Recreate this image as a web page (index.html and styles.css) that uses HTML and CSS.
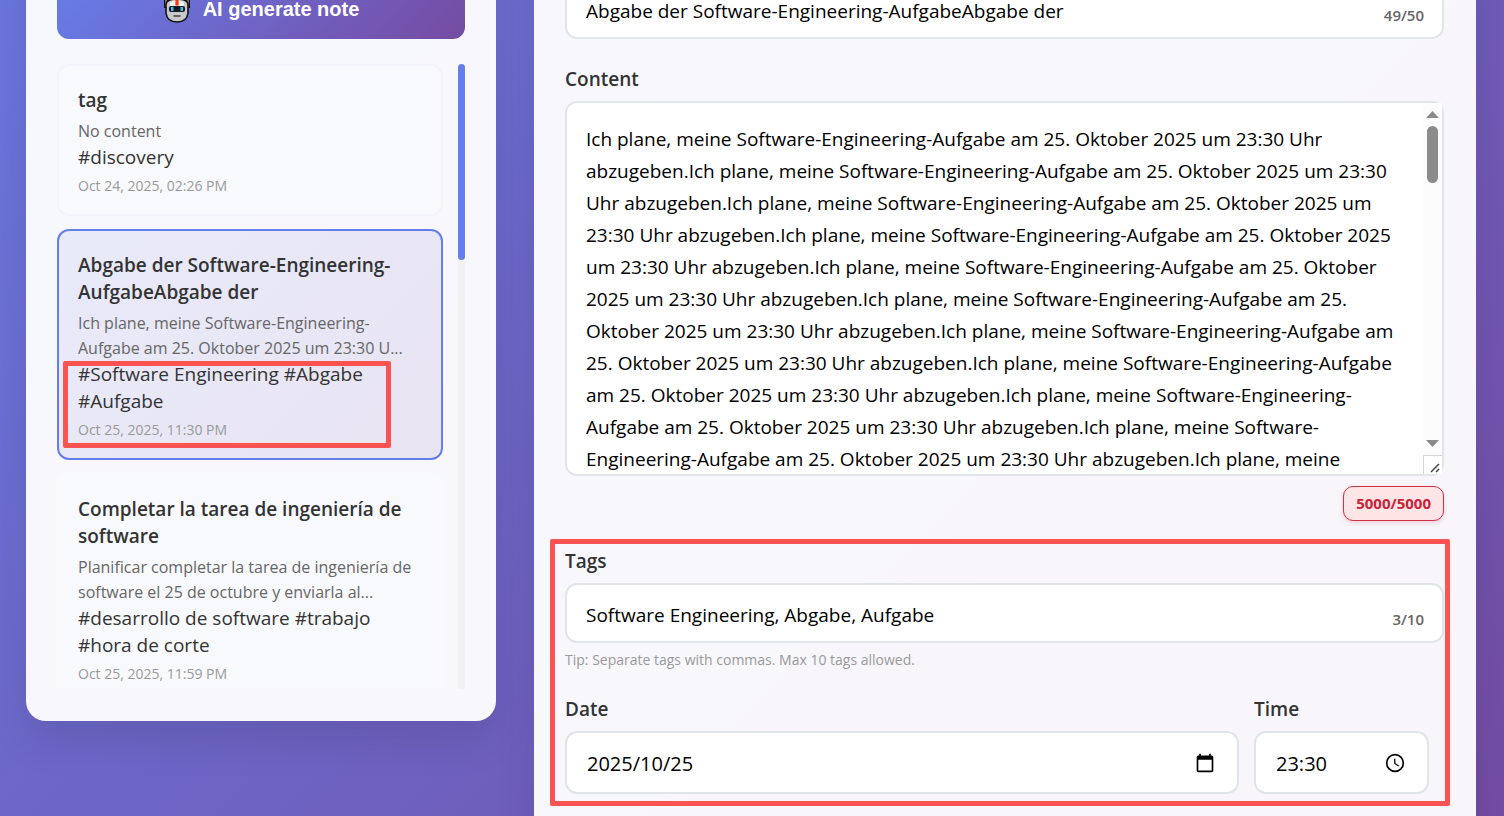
FILE: index.html
```html
<!DOCTYPE html>
<html lang="en">
<head>
<meta charset="utf-8">
<title>Notes</title>
<link rel="stylesheet" href="styles.css">
</head>
<body>
<main class="page">
  <aside class="panel sidebar">
    <button class="generate" type="button">
      <svg class="robot" viewBox="0 0 28 30" aria-hidden="true">
        <path d="M3 0v14M25 0v14" stroke="#111" stroke-width="4"/>
        <path d="M3 1v12M25 1v12" stroke="#8d8d92" stroke-width="1.6"/>
        <path d="M3 10Q4 5 14 5t11 5v9q-1 9-11 9T3 19z" fill="#c9c9cb" stroke="#111" stroke-width="1.6"/>
        <path d="M7 8q7-2 14 0v4H7z" fill="#f4f2f0"/>
        <path d="M12.400 6h3.200v5.500h-3.200z" fill="#f03a17"/>
        <rect x="6" y="12" width="16" height="6" rx="2" fill="#15191d"/>
        <path d="M8 13h2.500v4H8zM17.500 13H20v4h-2.500z" fill="#35c3f0"/>
        <path d="M10.500 22h7" stroke="#333" stroke-width="1.400"/>
      </svg>
      <span>AI generate note</span>
    </button>
    <div class="list-area">
      <div class="list">
        <article class="card">
          <h3 class="card-title">tag</h3>
          <p class="preview">No content</p>
          <p class="tags">#discovery</p>
          <time class="stamp">Oct 24, 2025, 02:26 PM</time>
        </article>
        <article class="card active">
          <h3 class="card-title">Abgabe der Software-Engineering-AufgabeAbgabe der</h3>
          <p class="preview">Ich plane, meine Software-Engineering-Aufgabe am 25. Oktober 2025 um 23:30 U...</p>
          <p class="tags">#Software Engineering #Abgabe #Aufgabe</p>
          <time class="stamp">Oct 25, 2025, 11:30 PM</time>
          <span class="mark mark-card"></span>
        </article>
        <article class="card">
          <h3 class="card-title">Completar la tarea de ingeniería de software</h3>
          <p class="preview">Planificar completar la tarea de ingeniería de software el 25 de octubre y enviarla al...</p>
          <p class="tags">#desarrollo de software #trabajo #hora de corte</p>
          <time class="stamp">Oct 25, 2025, 11:59 PM</time>
        </article>
      </div>
      <div class="track" aria-hidden="true"><div class="thumb"></div></div>
    </div>
  </aside>

  <form class="panel editor">
    <div class="field title-field">
      <input class="control" id="title" type="text" aria-label="Title" value="Abgabe der Software-Engineering-AufgabeAbgabe der">
      <span class="count">49/50</span>
    </div>
    <label class="label content-label" for="content">Content</label>
    <div class="field">
      <textarea class="control content" id="content"></textarea>
      <div class="area-scroll" aria-hidden="true">
        <svg class="arrow" viewBox="0 0 13 7"><path d="M0 7L6.500 0L13 7z"/></svg>
        <div class="area-track"><div class="area-thumb"></div></div>
        <svg class="arrow" viewBox="0 0 13 7"><path d="M0 0h13L6.500 7z"/></svg>
        <svg class="grip" viewBox="0 0 19 19"><path d="M.5 19V.5H19" fill="none" stroke="#d4d4d4"/><path d="M8 17l8-8M13 17l3-3" stroke="#444" stroke-width="1.500"/></svg>
      </div>
    </div>
    <div class="limit-row"><span class="limit">5000/5000</span></div>
    <section class="details">
      <label class="label" for="tags">Tags</label>
      <div class="field">
        <input class="control" id="tags" type="text" value="Software Engineering, Abgabe, Aufgabe">
        <span class="count">3/10</span>
      </div>
      <p class="tip">Tip: Separate tags with commas. Max 10 tags allowed.</p>
      <div class="when">
        <div>
          <label class="label" for="date">Date</label>
          <div class="field">
            <input class="control picker" id="date" type="text" value="2025/10/25">
            <svg class="picker-icon" viewBox="0 0 24 24" aria-hidden="true"><path d="M20 3h-1V1h-2v2H7V1H5v2H4c-1.100 0-2 .9-2 2v16c0 1.100.9 2 2 2h16c1.100 0 2-.9 2-2V5c0-1.100-.9-2-2-2zm0 18H4V8h16v13z"/></svg>
          </div>
        </div>
        <div>
          <label class="label" for="time">Time</label>
          <div class="field">
            <input class="control picker" id="time" type="text" value="23:30">
            <svg class="picker-icon" viewBox="0 0 24 24" aria-hidden="true"><path d="M12 1a11 11 0 1 0 0 22a11 11 0 0 0 0-22zm0 20a9 9 0 1 1 0-18a9 9 0 0 1 0 18zM12.500 7H11v6l5 3.200.8-1.300-4.300-2.600z"/></svg>
          </div>
        </div>
      </div>
      <span class="mark mark-details"></span>
    </section>
  </form>
</main>
<script src="app.js"></script>
</body>
</html>
```
FILE: styles.css
```css
* { box-sizing: border-box; margin: 0; }

html { height: 100%; overflow: hidden; }

body {
  height: 100%;
  overflow: hidden;
  background: linear-gradient(135deg, #6976dc, #734ca4);
  font-family: "Open Sans", "Noto Sans", sans-serif;
  font-size: 19px;
  line-height: 27px;
  color: #333;
}

.page {
  display: grid;
  grid-template-columns: 470px 1fr;
  gap: 38px;
  align-items: start;
  margin-top: -52px;
  padding: 0 28px 0 26px;
}

.panel {
  min-width: 0;
  padding: 31px 31px 32px;
  border-radius: 20px;
  background: rgba(255, 255, 255, 0.95);
  box-shadow: 0 20px 40px rgba(0, 0, 0, 0.1);
}

.editor { padding-right: 32px; padding-bottom: 60px; }

.generate {
  display: flex;
  align-items: center;
  justify-content: center;
  gap: 12px;
  width: 100%;
  height: 60px;
  border: 0;
  border-radius: 12px;
  background: linear-gradient(135deg, #667eea, #764ba2);
  color: #fff;
  font: bold 20px/24px "Liberation Sans", sans-serif;
}

.robot { width: 28px; height: 30px; fill: none; }

.list-area { display: flex; gap: 15px; margin-top: 25px; height: 625px; }

.list {
  flex: 1;
  display: flex;
  flex-direction: column;
  gap: 13px;
  min-width: 0;
  overflow: hidden;
}

.track { width: 7px; border-radius: 4px; background: #f1f1f1; }
.thumb { height: 196px; border-radius: 4px; background: #667eea; }

.card {
  position: relative;
  flex: none;
  padding: 21px 19px 18px;
  border: 2px solid #f3f4fb;
  border-radius: 12px;
  background: #f8f9fc;
}

.card:last-child { border-color: #f8f9fc; }

.active {
  border-color: #667eea;
  background: linear-gradient(135deg, #e8eafa, #e9e4f2);
}

.card-title { margin-bottom: 5px; font-size: 19px; line-height: 27px; font-weight: 600; }
.preview { font-size: 16px; line-height: 25px; color: #666; }
.stamp { display: block; margin-top: 5px; font-size: 14px; line-height: 20px; color: #999; }

.mark {
  position: absolute;
  border: 5px solid #fb5252;
  border-radius: 2px;
  pointer-events: none;
}

.mark-card { inset: 130px 50px 10px 4px; }
.mark-details { inset: -9px -6px -12px -15px; }

.field { position: relative; display: flex; }

.control {
  width: 100%;
  height: 60px;
  padding: 3px 19px 0;
  border: 2px solid #e1e5e9;
  border-radius: 12px;
  outline: 0;
  background: #fff;
  color: #000;
  font: inherit;
}

.count {
  position: absolute;
  right: 20px;
  bottom: 14px;
  font-size: 15px;
  font-weight: 600;
  line-height: 20px;
  color: #666;
}

.label { display: block; margin-bottom: 8px; font-weight: 600; }
.content-label { margin-top: 27px; }

.content {
  height: 375px;
  padding: 20px 42px 20px 19px;
  resize: none;
  scrollbar-width: none;
  line-height: 32px;
}

.area-scroll {
  position: absolute;
  inset: 2px 2px 2px auto;
  display: flex;
  flex-direction: column;
  align-items: center;
  width: 19px;
  padding-top: 8px;
  background: #fcfcfc;
}

.arrow { width: 13px; height: 7px; fill: #8b8b8b; }
.area-track { flex: 1; width: 11px; padding-top: 8px; }
.area-thumb { height: 57px; border-radius: 6px; background: #8b8b8b; }
.grip { width: 19px; height: 19px; margin-top: 8px; background: #fff; }

.limit-row { display: flex; justify-content: flex-end; margin-top: 10px; }

.limit {
  padding: 4px 12px;
  border: 1px solid #d03045;
  border-radius: 10px;
  background: #ffe5e6;
  box-shadow: 0 2px 4px rgba(208, 48, 69, 0.2);
  font-size: 15px;
  font-weight: 700;
  line-height: 25px;
  color: #c92338;
}

.details { position: relative; margin-top: 27px; }
.tip { margin-top: 7px; font-size: 14px; line-height: 20px; color: #999; }

.when {
  display: grid;
  grid-template-columns: 1fr 175px;
  gap: 15px;
  margin-top: 26px;
  padding-right: 15px;
}

.picker { height: 63px; padding: 2px 50px 0 20px; font-size: 20px; }

.picker-icon {
  position: absolute;
  top: 22px;
  right: 24px;
  width: 20px;
  height: 20px;
}
```
FILE: app.js
```js
const sentence = "Ich plane, meine Software-Engineering-Aufgabe am 25. Oktober 2025 um 23:30 Uhr abzugeben.";
document.getElementById("content").value = sentence.repeat(60).slice(0, 5000);
```
